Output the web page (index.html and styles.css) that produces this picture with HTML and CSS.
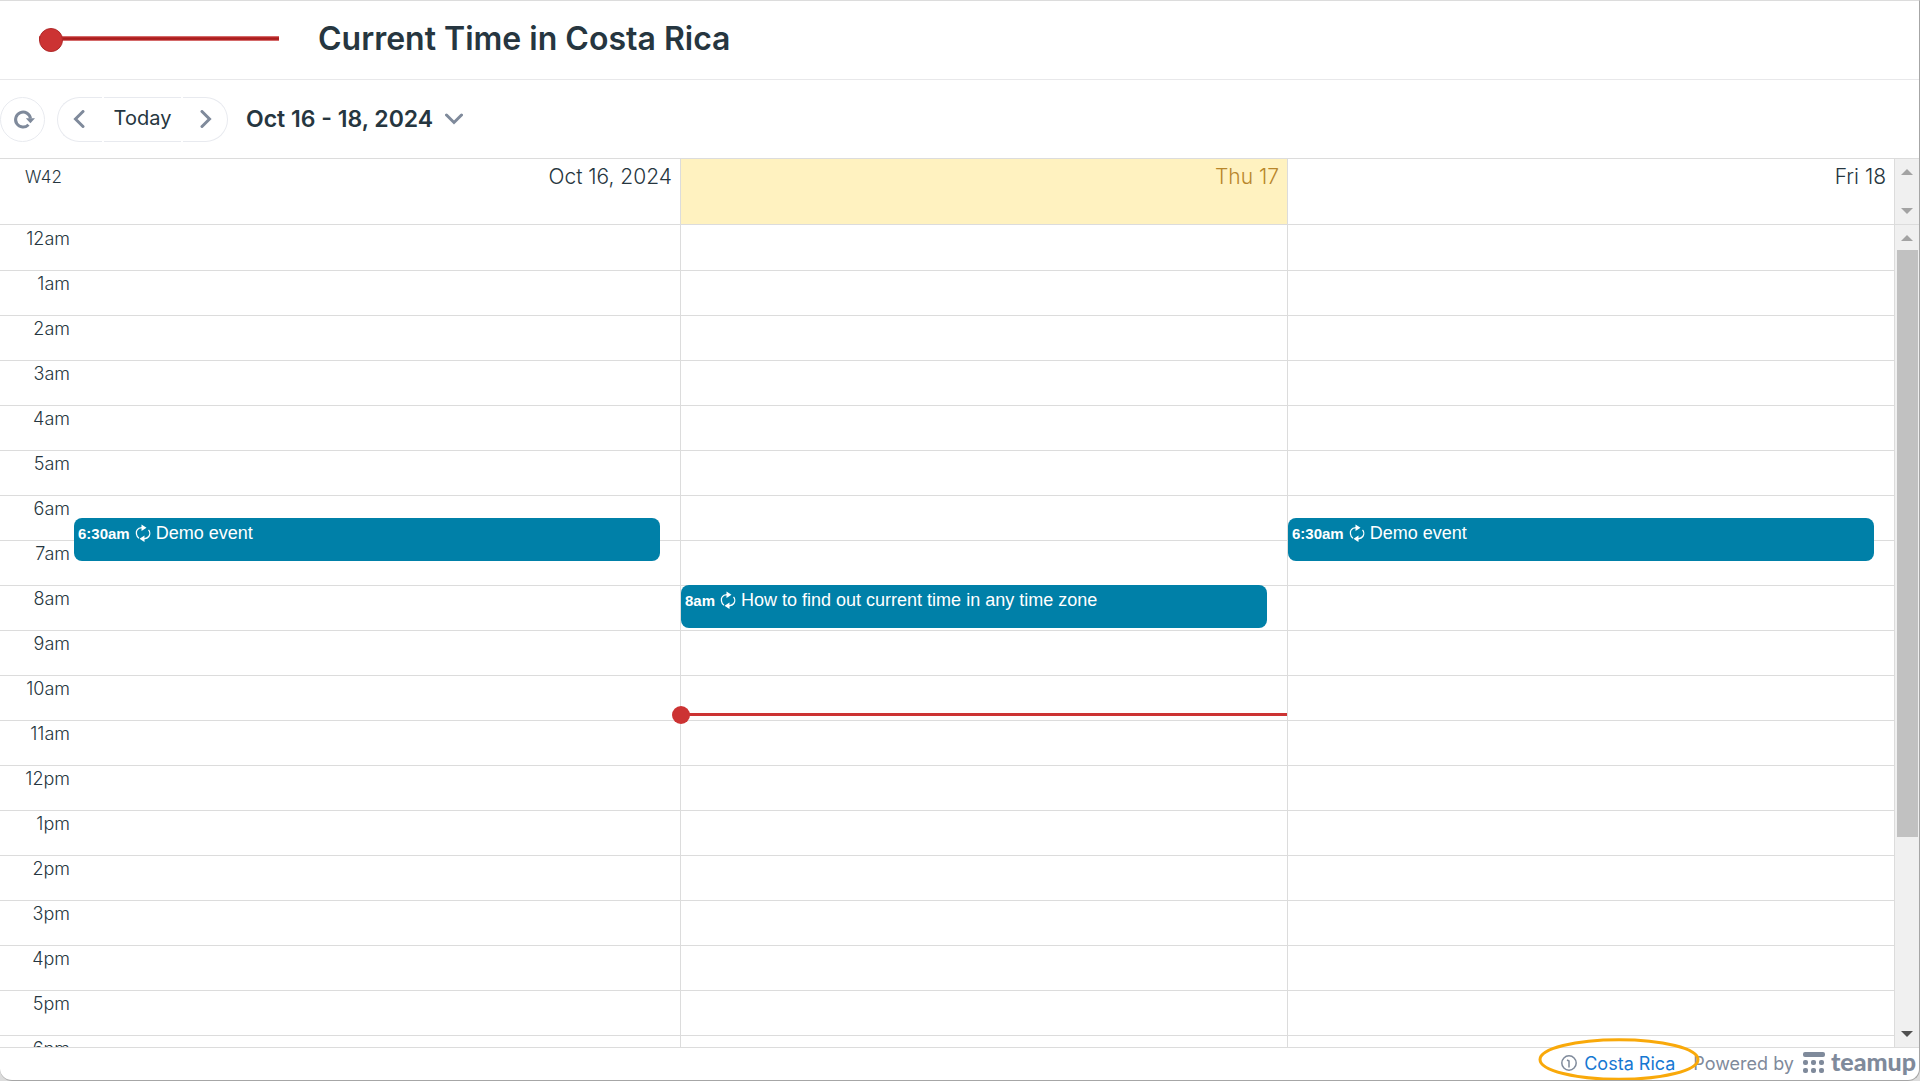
FILE: index.html
```html
<!DOCTYPE html>
<html lang="en">
  <head>
    <meta charset="utf-8">
    <meta name="viewport" content="width=device-width, initial-scale=1">
    <title>Current Time in Costa Rica</title>
    <link rel="stylesheet" href="styles.css">
  </head>

  <body>
    <svg width="0" height="0" class="defs">
      <symbol id="repeat" viewBox="0 0 16 18">
        <path d="M4 14.200C1 12.500 .8 7.500 2.200 5.800Q3.500 3.800 7 3.700M9 14.800Q12.500 14.300 13.800 12.500C15.200 10.500 15 7.500 13.500 6" fill="none" stroke="#fff" stroke-width="1.300"/>
        <path d="M6.500 .5l5 3.200-5 3.300zM9.500 11.500l-5 3.200 5 3.300z" fill="#fff"/>
      </symbol>
    </svg>

    <div class="window">
      <header class="title_bar">
        <div class="title_line"></div>
        <h1>Current Time in Costa Rica</h1>
      </header>

      <div class="toolbar">
        <button class="refresh" aria-label="Refresh">
          <svg width="22" height="20" viewBox="0 0 22 20">
            <path d="M15.500 15.800A7.500 7.500 0 1 1 17.500 9.500" fill="none" stroke="#7f8a9b" stroke-width="3"/>
            <path d="M12.800 9.300h9.200l-4.600 5z" fill="#7f8a9b"/>
          </svg>
        </button>
        <div class="pager">
          <button class="prev" aria-label="Previous">
            <svg width="12" height="18" viewBox="0 0 12 18"><path d="M10 1.500L2.500 9l7.500 7.500" /></svg>
          </button>
          <button class="today">Today</button>
          <button class="next" aria-label="Next">
            <svg width="12" height="18" viewBox="0 0 12 18"><path d="M2 1.500L9.500 9 2 16.500" /></svg>
          </button>
        </div>
        <button class="range">
          Oct 16 - 18, 2024
          <svg width="18" height="12" viewBox="0 0 18 12"><path d="M1.500 2L9 9.500 16.500 2" /></svg>
        </button>
      </div>

      <div class="week_head">
        <div class="week_no">W42</div>
        <div class="day_name">Oct 16, 2024</div>
        <div class="day_name current">Thu 17</div>
        <div class="day_name">Fri 18</div>
        <div class="scrollbar">
          <i class="arrow up"></i>
          <i class="arrow down"></i>
        </div>
      </div>

      <main class="week_body">
        <div class="hours">
          <div>12am</div>
          <div>1am</div>
          <div>2am</div>
          <div>3am</div>
          <div>4am</div>
          <div>5am</div>
          <div>6am</div>
          <div>7am</div>
          <div>8am</div>
          <div>9am</div>
          <div>10am</div>
          <div>11am</div>
          <div>12pm</div>
          <div>1pm</div>
          <div>2pm</div>
          <div>3pm</div>
          <div>4pm</div>
          <div>5pm</div>
          <div>6pm</div>
        </div>
        <div class="day">
          <div class="event" style="top: 293px"><b>6:30am</b><svg width="16" height="18"><use href="#repeat"/></svg>Demo event</div>
        </div>
        <div class="day">
          <div class="event" style="top: 360px"><b>8am</b><svg width="16" height="18"><use href="#repeat"/></svg>How to find out current time in any time zone</div>
          <div class="now" style="top: 488px"></div>
        </div>
        <div class="day">
          <div class="event" style="top: 293px"><b>6:30am</b><svg width="16" height="18"><use href="#repeat"/></svg>Demo event</div>
        </div>
        <div class="scrollbar">
          <i class="arrow up"></i>
          <div class="thumb"></div>
          <i class="arrow down dark"></i>
        </div>
      </main>

      <footer>
        <div class="zone">
          <svg width="16" height="16" viewBox="0 0 16 16">
            <circle cx="8" cy="8" r="7.200" fill="none" stroke="#7f8a9b" stroke-width="1.500"/>
            <path d="M6 5l2 1v6.500" fill="none" stroke="#7f8a9b" stroke-width="1.500"/>
          </svg>
          <a href="#">Costa Rica</a>
          <svg class="ring" width="162" height="43" viewBox="0 0 162 43">
            <ellipse cx="81" cy="21.500" rx="79" ry="19.800" fill="none" stroke="#f9a90a" stroke-width="3"/>
          </svg>
        </div>
        <span>Powered by</span>
        <a class="brand" href="#">
          <svg width="22" height="21" viewBox="0 0 22 21" fill="#7f8a9b">
            <rect width="22" height="5" rx="2"/>
            <rect y="8" width="5" height="5" rx="2"/>
            <rect x="8" y="8" width="5" height="5" rx="2"/>
            <rect x="16" y="8" width="5" height="5" rx="2"/>
            <rect y="16" width="5" height="5" rx="2"/>
            <rect x="8" y="16" width="5" height="5" rx="2"/>
            <rect x="16" y="16" width="5" height="5" rx="2"/>
          </svg>
          <span>teamup</span>
        </a>
      </footer>
    </div>
  </body>
</html>
```

FILE: styles.css
```css
* {
  box-sizing: border-box;
}

body {
  margin: 0;
  background-color: #dcdcdc;
  font-family: Inter, "Liberation Sans", sans-serif;
  font-size: 18px;
  color: #263640;
}

button {
  padding: 0;
  border: 1px solid #e8eaef;
  background: #fff;
  color: inherit;
  font-family: inherit;
}

button path {
  fill: none;
  stroke: #7f8a9b;
  stroke-width: 3;
  stroke-linecap: round;
}

.refresh path {
  stroke-linecap: butt;
}

.refresh path + path {
  fill: #7f8a9b;
  stroke: none;
}

.defs {
  position: absolute;
}

.window {
  display: flex;
  flex-direction: column;
  height: 100vh;
  overflow: hidden;
  background-color: #fff;
  border: 1px solid #a6a6a6;
  border-top-color: #dcdcdc;
  border-left: none;
  border-radius: 0 0 12px 12px;
}

.title_bar {
  display: flex;
  align-items: center;
  height: 79px;
  padding: 0 39px 3px;
  gap: 39px;
  border-bottom: 1px solid #e8e8ea;
}

.title_line {
  position: relative;
  width: 240px;
  height: 5px;
  background: linear-gradient(#d46a6a 1px, #c13030 1px, #a01818 3px, #c13030 4px, #d46a6a 4px);
}

.title_line::before {
  content: "";
  position: absolute;
  left: 0;
  top: -8px;
  width: 22px;
  height: 22px;
  border-radius: 50%;
  border: 1px solid #b02a2a;
  background-color: #c33;
}

h1 {
  margin: 0;
  font-size: 32px;
  font-weight: 600;
}

.toolbar {
  display: flex;
  align-items: center;
  height: 79px;
  border-bottom: 1px solid #dcdcdc;
}

.refresh {
  display: flex;
  align-items: center;
  justify-content: center;
  width: 45px;
  height: 45px;
  padding-left: 2px;
  border-radius: 50%;
}

.pager {
  display: flex;
  gap: 2px;
  margin: 0 18px 0 12px;
}

.pager button {
  display: flex;
  align-items: center;
  justify-content: center;
  height: 45px;
}

.pager .prev {
  width: 45px;
  padding-right: 2px;
  border-right: none;
  border-radius: 23px 0 0 23px;
}

.pager .today {
  width: 77px;
  padding-bottom: 2px;
  border-left: none;
  border-right: none;
  font-size: 20px;
}

.pager .next {
  width: 45px;
  padding-left: 2px;
  border-left: none;
  border-radius: 0 23px 23px 0;
}

.range {
  display: flex;
  align-items: center;
  gap: 12px;
  border: none;
  font-size: 23px;
  font-weight: 600;
}

.week_head,
.week_body {
  display: grid;
  grid-template-columns: 74px repeat(3, 1fr) 24px;
}

.week_head {
  height: 66px;
}

.week_head > div {
  border-bottom: 1px solid #dcdcdc;
}

.week_no {
  padding: 8px 12px 0 0;
  text-align: right;
  font-size: 17px;
  font-weight: 300;
}

.day_name {
  padding: 5px 8px 0 0;
  border-right: 1px solid #dcdcdc;
  text-align: right;
  font-size: 21px;
  font-weight: 300;
}

.day_name.current {
  background-color: #fff2c0;
  color: #b8862b;
}

.week_body {
  flex: 1;
  min-height: 0;
  overflow: hidden;
  grid-template-rows: 100%;
}

.hours {
  padding-top: 1px;
}

.hours div {
  height: 45px;
  padding: 2px 4px 0 0;
  text-align: right;
  font-weight: 300;
}

.hours,
.day {
  background: repeating-linear-gradient(transparent 0 44px, #dcdcdc 44px 45px) 0 1px no-repeat;
}

.day {
  position: relative;
  border-right: 1px solid #dcdcdc;
}

.event {
  position: absolute;
  left: 0;
  right: 20px;
  height: 43px;
  padding: 4px;
  display: flex;
  align-items: flex-start;
  border-radius: 8px;
  background-color: #0080a8;
  color: #fff;
  font-family: "Liberation Sans", sans-serif;
  font-size: 18px;
  line-height: 22px;
}

.event b {
  font-size: 15px;
  line-height: 24px;
}

.event svg {
  margin: 2px 5px 0;
}

.now {
  position: absolute;
  left: 0;
  right: 0;
  height: 3px;
  background-color: #c33;
}

.now::before {
  content: "";
  position: absolute;
  left: -9px;
  top: -7px;
  width: 18px;
  height: 18px;
  border-radius: 50%;
  background-color: #c33;
}

.scrollbar {
  display: flex;
  flex-direction: column;
  align-items: center;
  justify-content: space-between;
  padding: 10px 0;
  background-color: #f0f0f0;
}

.arrow {
  border: 6px solid transparent;
}

.arrow.up {
  border-top: none;
  border-bottom-color: #a3a3a3;
}

.arrow.down {
  border-bottom: none;
  border-top-color: #a3a3a3;
}

.arrow.dark {
  border-top-color: #505050;
}

.thumb {
  width: 21px;
  height: 587px;
  margin: 9px 0 auto;
  background-color: #c1c1c1;
}

footer {
  display: flex;
  align-items: center;
  justify-content: flex-end;
  height: 33px;
  padding: 0 3px 2px 0;
  border-top: 1px solid #dcdcdc;
  color: #7f8a9b;
}

footer a {
  color: #1778d2;
  text-decoration: none;
}

.zone {
  position: relative;
  display: flex;
  align-items: center;
  gap: 7px;
  margin-right: 18px;
}

.ring {
  position: absolute;
  left: -23px;
  top: -15px;
}

.brand {
  display: flex;
  align-items: center;
  gap: 6px;
  margin-left: 9px;
  padding-bottom: 2px;
}

footer .brand {
  color: #7f8a9b;
}

.brand span {
  padding-bottom: 2px;
  font-family: Lato, sans-serif;
  font-size: 25px;
  font-weight: 900;
  line-height: 26px;
}
```
